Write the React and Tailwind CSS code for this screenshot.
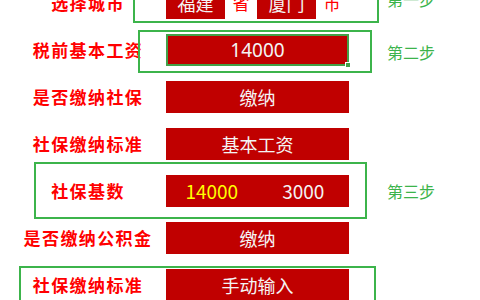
import React from 'react';

const cjk = "font-['Noto_Sans_CJK_SC',sans-serif]";

// one form row: label | value | step note, green annotation drawn over it
function Row({ label, step, stepClass = '', mark, children }) {
  return (
    <div className="relative flex items-center h-[32px]">
      <div className={`w-[166px] pl-[10px] text-center text-[17px] font-bold tracking-[1.4px] text-[#ff0000] ${cjk}`}>
        {label}
      </div>
      <div className="w-[183px] h-full flex">{children}</div>
      {step && (
        <div className={`ml-[38px] text-[16px] text-[#3cb44b] ${cjk} ${stepClass}`}>{step}</div>
      )}
      {mark && <div className={`absolute border-2 border-[#3cb44b] pointer-events-none ${mark}`}></div>}
    </div>
  );
}

function Cell({ children, className = '' }) {
  return (
    <div className={`flex-1 h-full bg-[#c00000] flex items-center justify-center text-[18px] text-[#f4f4f4] ${cjk} ${className}`}>
      {children}
    </div>
  );
}

export default function App() {
  return (
    <div className="w-[480px] h-[300px] overflow-hidden bg-white">
      <div className="mt-[-13px] flex flex-col gap-[15px]">
        {/* step 1 */}
        <Row label="选择城市" step="第一步" stepClass="mt-[-8px]" mark="left-[133px] w-[246px] top-[-4px] bottom-[-4px]">
          <div className={`w-[59px] h-full bg-[#c00000] flex items-center justify-center text-[18px] text-[#f4f4f4] ${cjk}`}>福建</div>
          <div className={`w-[32px] flex items-center justify-center text-[17px] text-[#ff0000] ${cjk}`}>省</div>
          <div className={`w-[59px] h-full bg-[#c00000] flex items-center justify-center text-[18px] text-[#f4f4f4] ${cjk}`}>厦门</div>
          <div className={`w-[32px] flex items-center justify-center text-[17px] text-[#ff0000] ${cjk}`}>市</div>
        </Row>

        {/* step 2 */}
        <Row label="税前基本工资" step="第二步" stepClass="mt-[4px]" mark="left-[138px] w-[234px] top-[-4px] bottom-[-7px]">
          <div className="relative flex-1 h-full bg-[#c00000] border-2 border-[#43a047] flex items-center justify-center text-[19px] text-[#f4f4f4] font-['Noto_Sans',sans-serif]">
            14000
            <span className="absolute right-[-4px] bottom-[-4px] w-[6px] h-[6px] bg-[#43a047] border border-white"></span>
          </div>
        </Row>

        <Row label="是否缴纳社保">
          <Cell>缴纳</Cell>
        </Row>

        <Row label="社保缴纳标准">
          <Cell>基本工资</Cell>
        </Row>

        {/* step 3 */}
        <Row label="社保基数" step="第三步" mark="left-[34px] w-[333px] top-[-13px] bottom-[-12px]">
          <Cell className="text-[#ffff00] font-['Noto_Sans',sans-serif] text-[19px]">14000</Cell>
          <Cell className="font-['Noto_Sans',sans-serif] text-[19px]">3000</Cell>
        </Row>

        <Row label="是否缴纳公积金">
          <Cell>缴纳</Cell>
        </Row>

        <Row label="社保缴纳标准" mark="left-[19px] w-[357px] top-[-3px] bottom-[-12px]">
          <Cell>手动输入</Cell>
        </Row>
      </div>
    </div>
  );
}
